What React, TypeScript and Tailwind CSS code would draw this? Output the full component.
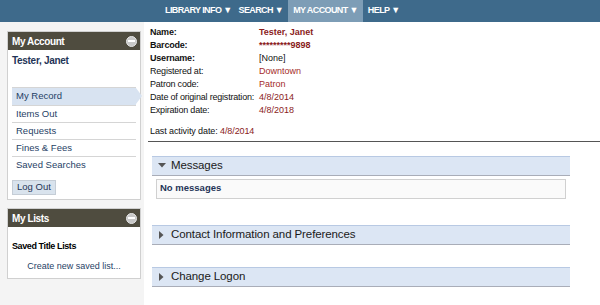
import React from "react";

const font = { fontFamily: '"Liberation Sans", Arial, sans-serif' };

function Minus() {
  return (
    <span className="flex h-[11px] w-[11px] items-center justify-center rounded-full bg-[#c8c8c8] border border-[#e6e6e6]">
      <span className="block h-[2px] w-[7px] bg-white" />
    </span>
  );
}

function PanelHeader({ title }: { title: string }) {
  return (
    <div className="flex h-[18px] items-center justify-between bg-[#4f4c3f] pl-[4px] pr-[3px]">
      <span className="text-[10px] font-bold text-white tracking-[-0.4px]">{title}</span>
      <Minus />
    </div>
  );
}

function Section({ title, open }: { title: string; open?: boolean }) {
  return (
    <div className="flex h-[20px] items-center border-t border-t-[#b8c9e3] border-b border-b-[#a9adb8] bg-[#dce6f4] pl-[6px]">
      {open ? (
        <svg width="8" height="5" viewBox="0 0 8 5" className="mr-[5px]">
          <polygon points="0,0 8,0 4,4.5" fill="#555" />
        </svg>
      ) : (
        <svg width="5" height="8" viewBox="0 0 5 8" className="ml-[1px] mr-[7px]">
          <polygon points="0,0 4.5,4 0,8" fill="#555" />
        </svg>
      )}
      <span className="text-[11.5px] text-[#1a1a1a] tracking-[-0.1px]">{title}</span>
    </div>
  );
}

export default function App() {
  const rows: [string, string, boolean, string][] = [
    ["Name:", "Tester, Janet", true, "#8a1c1c"],
    ["Barcode:", "*********9898", true, "#8a1c1c"],
    ["Username:", "[None]", true, "#111"],
    ["Registered at:", "Downtown", false, "#a42b2b"],
    ["Patron code:", "Patron", false, "#a42b2b"],
    ["Date of original registration:", "4/8/2014", false, "#8a1c1c"],
    ["Expiration date:", "4/8/2018", false, "#8a1c1c"],
  ];
  const menu = ["Items Out", "Requests", "Fines & Fees", "Saved Searches"];
  return (
    <div style={font} className="h-[305px] w-[600px] overflow-hidden bg-white">
      <div className="flex h-[22px] items-stretch bg-[#3e6a8b] pl-[160px] text-[9px] font-bold text-white tracking-[-0.6px]">
        <div className="flex items-center pl-[5px] pr-[3px] whitespace-nowrap">LIBRARY INFO ▼</div>
        <div className="flex items-center pl-[4px] pr-[5px] whitespace-nowrap">SEARCH ▼</div>
        <div className="flex items-center bg-[#7d9db6] px-[5px] whitespace-nowrap">MY ACCOUNT ▼</div>
        <div className="flex items-center px-[5px] whitespace-nowrap">HELP ▼</div>
      </div>
      <div className="flex">
        <div className="w-[144px] shrink-0 bg-[#f4f4f4] pl-[7px] pr-[3px] pt-[9px] h-[283px]">
          <div className="border border-[#d0d0d0] bg-white">
            <PanelHeader title="My Account" />
            <div className="px-[4px] pt-[3px] pb-[2px]">
              <div className="text-[10px] font-bold text-[#1f3457] tracking-[-0.3px]">Tester, Janet</div>
              <div className="mt-[19px] border-t border-[#d5d5d5]">
                <div className="relative flex h-[17px] items-center bg-[#d8e3f1] pl-[4px] text-[9.5px] text-[#1f3f66]">
                  My Record
                  <span className="absolute right-[-6px] top-0 h-0 w-0 border-y-[8.5px] border-l-[6px] border-y-transparent border-l-[#d8e3f1]" />
                </div>
                {menu.map((m) => (
                  <div key={m} className="flex h-[17px] items-center border-t border-[#d5d5d5] pl-[4px] text-[9.5px] text-[#1f3f66]">
                    {m}
                  </div>
                ))}
              </div>
              <div className="mt-[4px] inline-flex h-[15px] items-center border border-[#c5cdd6] bg-[#d9e3ed] px-[4px] text-[9.5px] text-[#1f3457]">
                Log Out
              </div>
            </div>
          </div>
          <div className="mt-[8px] border border-[#d0d0d0] bg-white">
            <PanelHeader title="My Lists" />
            <div className="px-[4px] pt-[13px] pb-[5px]">
              <div className="text-[9px] font-bold text-black tracking-[-0.4px]">Saved Title Lists</div>
              <div className="mt-[6px] text-center text-[9px] text-[#1f3f66]">Create new saved list...</div>
            </div>
          </div>
        </div>
        <div className="flex-1 pt-[4px] pl-[4px]">
          <div className="pl-[2px]">
            {rows.map(([l, v, b, c]) => (
              <div key={l} className="flex h-[13px] items-center text-[9px] leading-[13px] whitespace-nowrap">
                <span className={"w-[109px] shrink-0 text-[#111] tracking-[-0.2px] " + (b ? "font-bold" : "")}>{l}</span>
                <span className={b && c !== "#111" ? "font-bold" : ""} style={{ color: c }}>
                  {v}
                </span>
              </div>
            ))}
            <div className="mt-[8px] text-[9px] text-[#111] tracking-[-0.1px]">
              Last activity date: <span className="text-[#8a1c1c]">4/8/2014</span>
            </div>
          </div>
          <div className="mt-[2px] h-[1px] bg-[#555]" />
          <div className="w-[422px] pl-[4px] pt-[14px]">
            <Section title="Messages" open />
            <div className="mx-[4px] mt-[3px] flex h-[20px] items-center border border-[#d0d0d0] bg-[#fafafa] pl-[3px] text-[9.5px] font-bold text-[#1f3457]">
              No messages
            </div>
            <div className="mt-[26px]">
              <Section title="Contact Information and Preferences" />
            </div>
            <div className="mt-[22px]">
              <Section title="Change Logon" />
            </div>
          </div>
        </div>
      </div>
    </div>
  );
}
